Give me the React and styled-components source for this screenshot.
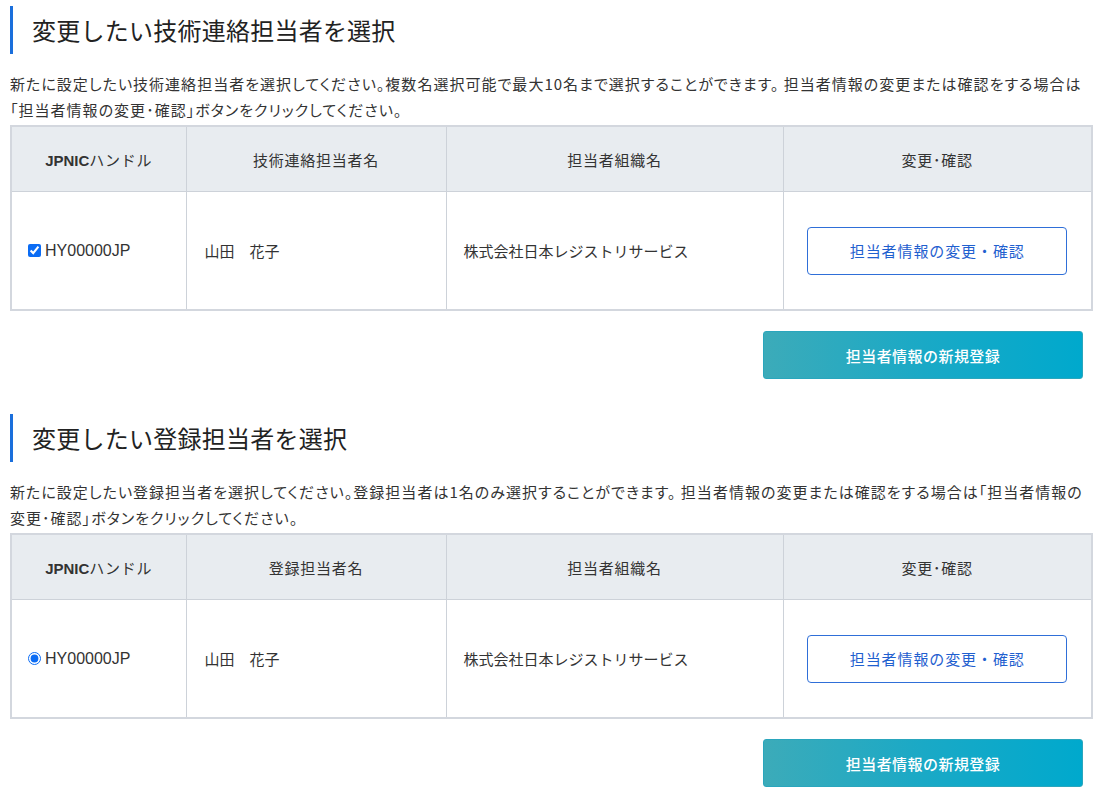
import React from "react";
import styled, { createGlobalStyle } from "styled-components";

const Global = createGlobalStyle`
  html, body { margin: 0; padding: 0; background: #fff; }
  body {
    font-family: "Noto Sans CJK JP", "Noto Sans", sans-serif;
    color: #333;
    -webkit-font-smoothing: antialiased;
  }
`;

const Page = styled.div`
  padding: 6px 9px 0 10px;
  width: 1081px;
`;

const Section = styled.section`
  margin-bottom: 35px;
`;

const Heading = styled.h2`
  margin: 0;
  border-left: 3px solid #1a6fdc;
  padding-left: 19px;
  font-size: 24px;
  line-height: 48px;
  font-weight: 400;
  color: #222;
  letter-spacing: 0.01em;
`;

const Desc = styled.p`
  margin: 17px 0 2px;
  font-size: 15px;
  line-height: 26px;
  color: #333;
  font-feature-settings: "palt";
  letter-spacing: 0.068em;
  white-space: nowrap;
`;

const Table = styled.table`
  width: 1081px;
  border-collapse: collapse;
  table-layout: fixed;
  border: 2px solid #d3d7de;
`;

const Th = styled.th`
  height: 64px;
  padding: 0;
  background: #e8ecf0;
  border: 1px solid #cdd2d9;
  font-size: 15px;
  font-weight: 400;
  color: #333;
  letter-spacing: 0.05em;
  text-align: center;
  b { font-weight: 700; letter-spacing: 0; font-family: "Liberation Sans", "Noto Sans CJK JP", sans-serif; }
`;

const Td = styled.td`
  height: 117px;
  padding: 0 0 0 ${(p) => p.$pl ?? 17}px;
  border: 1px solid #cdd2d9;
  font-size: 15px;
  color: #333;
  text-align: ${(p) => (p.$center ? "center" : "left")};
  vertical-align: middle;
`;

const Handle = styled.label`
  display: inline-flex;
  align-items: center;
  gap: 4px;
  font-family: "Liberation Sans", "Noto Sans CJK JP", sans-serif;
  font-size: 16px;
  color: #333;
  input {
    margin: 0;
    width: 13px;
    height: 13px;
    accent-color: #0b6cf4;
  }
`;

const OutlineButton = styled.button`
  width: 260px;
  height: 48px;
  background: #fff;
  border: 1px solid #2f6fd8;
  border-radius: 4px;
  color: #1f60cf;
  font-family: "Noto Sans CJK JP", sans-serif;
  font-size: 15px;
  letter-spacing: 0.06em;
  cursor: pointer;
`;

const Actions = styled.div`
  display: flex;
  justify-content: flex-end;
  padding: 20px 8px 0 0;
`;

const FillButton = styled.button`
  width: 320px;
  height: 48px;
  border: 1px solid #2aa6bd;
  border-radius: 3px;
  background: linear-gradient(90deg, #3cabb9 0%, #1aa9c6 50%, #00a9cd 100%);
  color: #fff;
  font-family: "Noto Sans CJK JP", sans-serif;
  font-size: 15px;
  font-weight: 500;
  letter-spacing: 0.03em;
  cursor: pointer;
`;

function ContactTable({ nameLabel, inputType }) {
  return (
    <Table>
      <colgroup>
        <col style={{ width: 175 }} />
        <col style={{ width: 260 }} />
        <col style={{ width: 337 }} />
        <col style={{ width: 309 }} />
      </colgroup>
      <thead>
        <tr>
          <Th><b>JPNIC</b>ハンドル</Th>
          <Th>{nameLabel}</Th>
          <Th>担当者組織名</Th>
          <Th>変更･確認</Th>
        </tr>
      </thead>
      <tbody>
        <tr>
          <Td $pl={16}>
            <Handle>
              <input type={inputType} defaultChecked name={inputType} />
              HY00000JP
            </Handle>
          </Td>
          <Td $pl={18}>山田　花子</Td>
          <Td $pl={17}>株式会社日本レジストリサービス</Td>
          <Td $pl={0} $center>
            <OutlineButton>担当者情報の変更・確認</OutlineButton>
          </Td>
        </tr>
      </tbody>
    </Table>
  );
}

export default function App() {
  return (
    <>
      <Global />
      <Page>
        <Section>
          <Heading>変更したい技術連絡担当者を選択</Heading>
          <Desc>
            新たに設定したい技術連絡担当者を選択してください。複数名選択可能で最大10名まで選択することができます。 担当者情報の変更または確認をする場合は
            <br />
            「担当者情報の変更･確認」ボタンをクリックしてください。
          </Desc>
          <ContactTable nameLabel="技術連絡担当者名" inputType="checkbox" />
          <Actions>
            <FillButton>担当者情報の新規登録</FillButton>
          </Actions>
        </Section>
        <Section>
          <Heading>変更したい登録担当者を選択</Heading>
          <Desc>
            新たに設定したい登録担当者を選択してください。登録担当者は1名のみ選択することができます。 担当者情報の変更または確認をする場合は「担当者情報の
            <br />
            変更･確認」ボタンをクリックしてください。
          </Desc>
          <ContactTable nameLabel="登録担当者名" inputType="radio" />
          <Actions>
            <FillButton>担当者情報の新規登録</FillButton>
          </Actions>
        </Section>
      </Page>
    </>
  );
}
